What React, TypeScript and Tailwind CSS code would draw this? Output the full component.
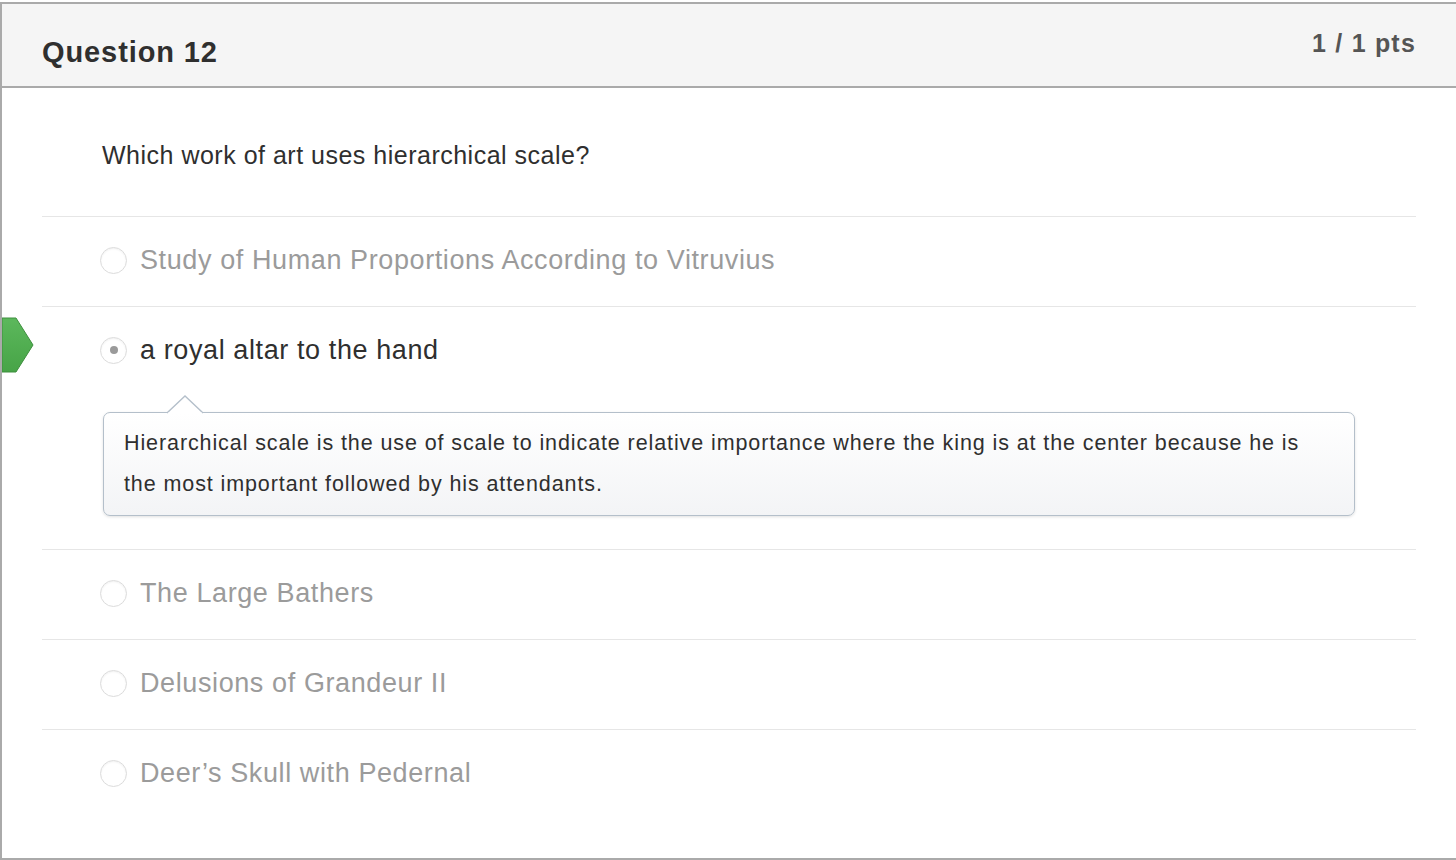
import React from 'react';

const answers = [
  { text: 'Study of Human Proportions According to Vitruvius', selected: false },
  { text: 'a royal altar to the hand', selected: true },
  { text: 'The Large Bathers', selected: false },
  { text: 'Delusions of Grandeur II', selected: false },
  { text: 'Deer\u2019s Skull with Pedernal', selected: false },
];

const comment =
  'Hierarchical scale is the use of scale to indicate relative importance where the king is at the center because he is the most important followed by his attendants.';

const Radio: React.FC<{ checked: boolean }> = ({ checked }) => (
  <span className="w-[27px] h-[27px] rounded-full border border-[#dcdcdc] bg-white shadow-[inset_0_1px_2px_rgba(0,0,0,0.06)] flex items-center justify-center shrink-0">
    {checked && <span className="w-[8px] h-[8px] rounded-full bg-[#9a9a9a]" />}
  </span>
);

export default function App() {
  return (
    <div className="w-[1456px] h-[860px] bg-white pt-[2px]" style={{ fontFamily: '"Liberation Sans", Arial, sans-serif' }}>
      <div className="h-[858px] border-t-2 border-l-2 border-b-2 border-[#aaaaaa]">
        {/* Header */}
        <div className="h-[84px] bg-[#f5f5f5] border-b-2 border-[#aaaaaa] flex justify-between pl-[40px] pr-[40px]">
          <h2 className="text-[29px] tracking-[0.9px] font-bold text-[#2f2f2f] pt-[32px] leading-[32px]">Question 12</h2>
          <span className="text-[25px] tracking-[1.2px] font-bold text-[#555555] pt-[25px] leading-[28px]">1 / 1 pts</span>
        </div>

        {/* Body */}
        <div className="px-[40px]">
          <div className="pl-[60px] pt-[52px] pb-[46px] text-[25px] tracking-[0.5px] leading-[30px] text-[#2f2f2f]">
            Which work of art uses hierarchical scale?
          </div>

          {answers.map((a) => (
            <div key={a.text} className="relative border-t-[1.5px] border-[#e6e6e6]">
              {a.selected && (
                <svg className="absolute left-[-40px] top-[10px]" width="32" height="56" viewBox="0 0 32 56">
                  <defs>
                    <linearGradient id="gr" x1="0" y1="0" x2="0" y2="1">
                      <stop offset="0" stopColor="#5cb85c" />
                      <stop offset="1" stopColor="#47a447" />
                    </linearGradient>
                  </defs>
                  <path d="M0 1 H14 L31 28 L14 55 H0 Z" fill="url(#gr)" stroke="#3e8f3e" strokeWidth="1" />
                </svg>
              )}
              <div className="flex items-center gap-[13px] pl-[58px] pt-[28px] pb-[31px]">
                <Radio checked={a.selected} />
                <span className={`text-[27px] tracking-[0.6px] leading-[30px] ${a.selected ? 'text-[#2f2f2f]' : 'text-[#9b9b9b]'}`}>
                  {a.text}
                </span>
              </div>
              {a.selected && (
                <div className="relative mx-[61px] mt-[16px] mb-[33px]">
                  <svg className="absolute left-[64px] top-[-17px]" width="36" height="19" viewBox="0 0 36 19">
                    <path d="M0 18 L18 1 L36 18" fill="#ffffff" stroke="#b4bfca" strokeWidth="1.3" />
                    <rect x="1" y="17.6" width="34" height="2" fill="#ffffff" />
                  </svg>
                  <div className="rounded-[7px] border-[1.5px] border-[#b4bfca] bg-gradient-to-b from-white to-[#f3f4f6] shadow-[0_1px_3px_rgba(0,0,0,0.12)] px-[20px] pt-[10px] pb-[10px] text-[21.5px] tracking-[0.9px] leading-[41px] text-[#2f2f2f]">
                    {comment}
                  </div>
                </div>
              )}
            </div>
          ))}
        </div>
      </div>
    </div>
  );
}
